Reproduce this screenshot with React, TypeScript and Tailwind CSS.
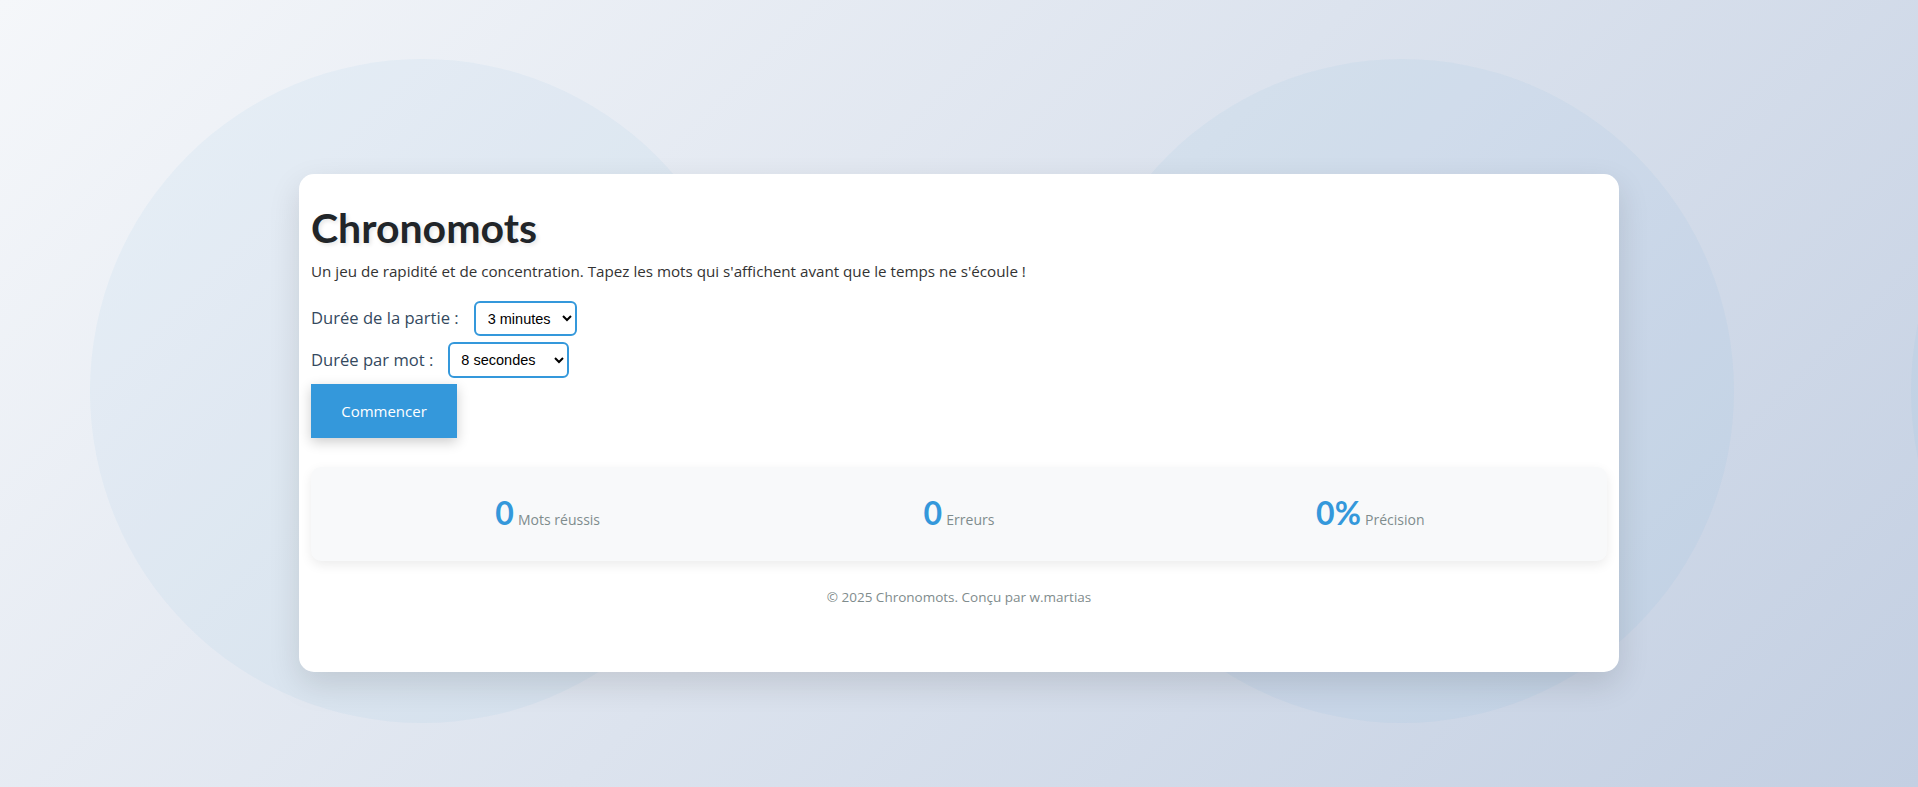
import React, { useState } from 'react';

const gameDurations = [
  { value: '60', label: '1 minute' },
  { value: '120', label: '2 minutes' },
  { value: '180', label: '3 minutes' },
  { value: '300', label: '5 minutes' },
];

const wordDurations = [
  { value: '5', label: '5 secondes' },
  { value: '8', label: '8 secondes' },
  { value: '10', label: '10 secondes' },
  { value: '15', label: '15 secondes' },
];

const Stat: React.FC<{ value: string; label: string }> = ({ value, label }) => (
  <div className="text-center">
    <span className="font-['Lato'] text-[32px] font-bold leading-none text-[#3498db]">{value}</span>{' '}
    <span className="text-[14px] text-[#7f8c8d]">{label}</span>
  </div>
);

export default function App() {
  const [gameDuration, setGameDuration] = useState('180');
  const [wordDuration, setWordDuration] = useState('8');

  return (
    <div
      className="relative h-screen w-full overflow-hidden bg-[linear-gradient(135deg,#f5f7fa_0%,#c3cfe2_100%)]"
      style={{ fontFamily: '"Open Sans", Lato, sans-serif' }}
    >
      {/* decorative circles behind the card */}
      <div className="absolute left-[90px] top-[59px] h-[664px] w-[664px] rounded-full bg-[rgba(52,152,219,0.05)]" />
      <div className="absolute left-[1070px] top-[59px] h-[664px] w-[664px] rounded-full bg-[rgba(52,152,219,0.05)]" />
      <div className="absolute left-[1911px] top-[59px] h-[664px] w-[664px] rounded-full bg-[rgba(52,152,219,0.05)]" />

      <div className="relative flex justify-center pt-[174px]">
        <div className="h-[498px] w-[1320px] rounded-[15px] bg-white px-3 pt-[30px] shadow-[0_12px_32px_rgba(0,0,0,0.12)]">
          <h1 className="font-['Lato'] text-[41px] font-bold leading-[48px] text-[#212529] [text-shadow:2px_2px_4px_rgba(0,0,0,0.1)]">
            Chronomots
          </h1>
          <p className="mt-[9px] text-[15.2px] leading-[20px] text-[#333]">
            Un jeu de rapidité et de concentration. Tapez les mots qui s'affichent avant que le temps ne s'écoule !
          </p>

          <div className="mt-[20px] flex h-[35px] items-center">
            <label className="text-[16.6px] text-[#34495e]">Durée de la partie :</label>
            <select
              value={gameDuration}
              onChange={(e) => setGameDuration(e.target.value)}
              className="ml-[15px] h-[35px] rounded-[6px] border-2 border-[#3498db] bg-white px-[8px] text-[14.5px] text-black"
              style={{ fontFamily: '"Liberation Sans", Arial, sans-serif' }}
            >
              {gameDurations.map((d) => (
                <option key={d.value} value={d.value}>
                  {d.label}
                </option>
              ))}
            </select>
          </div>

          <div className="mt-[6px] flex h-[36px] items-center">
            <label className="text-[16.6px] text-[#34495e]">Durée par mot :</label>
            <select
              value={wordDuration}
              onChange={(e) => setWordDuration(e.target.value)}
              className="ml-[15px] h-[36px] rounded-[6px] border-2 border-[#3498db] bg-white px-[7px] text-[14.5px] text-black"
              style={{ fontFamily: '"Liberation Sans", Arial, sans-serif' }}
            >
              {wordDurations.map((d) => (
                <option key={d.value} value={d.value}>
                  {d.label}
                </option>
              ))}
            </select>
          </div>

          <button className="mt-[6px] h-[54px] w-[146px] bg-[#3498db] text-[15px] text-white shadow-[0_4px_12px_rgba(0,0,0,0.2)]">
            Commencer
          </button>

          <div className="mt-[29px] grid h-[94px] grid-cols-3 items-center rounded-[10px] bg-[#f8f9fa] px-[31px] shadow-[0_4px_12px_rgba(0,0,0,0.08)]">
            <Stat value="0" label="Mots réussis" />
            <Stat value="0" label="Erreurs" />
            <Stat value="0%" label="Précision" />
          </div>

          <p className="mt-[26px] text-center text-[13.5px] leading-[20px] text-[#7f8c8d]">
            © 2025 Chronomots. Conçu par w.martias
          </p>
        </div>
      </div>
    </div>
  );
}
